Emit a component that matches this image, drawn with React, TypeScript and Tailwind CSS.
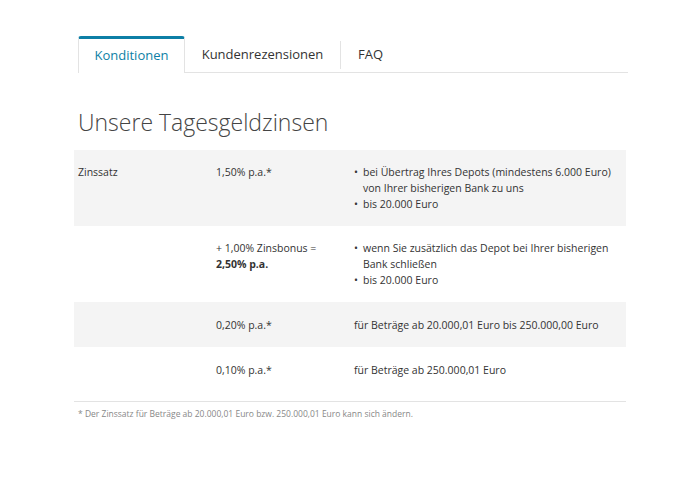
export default function App() {
    const font = { fontFamily: '"Open Sans", "Liberation Sans", sans-serif' };
    return (
        <div className="w-[680px] h-[477px] bg-white text-[#333]" style={font}>
            <div className="ml-[74px] w-[552px] pt-[36px]">
                {/* Tabs */}
                <div className="flex h-[37px] border-b border-[#e3e3e3] ml-[4px] -mr-[2px]">
                    <div className="w-[107px] border-t-[3px] border-t-[#0d7fa6] border-x border-x-[#e3e3e3] rounded-t-[3px] bg-white -mb-px flex items-center justify-center text-[13px] text-[#0d7fa6]">
                        Konditionen
                    </div>
                    <div className="w-[155px] flex items-center justify-center text-[13px] pt-[2px]">Kundenrezensionen</div>
                    <div className="w-px bg-[#e3e3e3] h-[28px] mt-[5px]" />
                    <div className="pl-[17px] flex items-center text-[13px] pt-[2px]">FAQ</div>
                </div>

                <h1 className="ml-[4px] mt-[34px] text-[23px] font-light text-[#444] leading-[30px]">Unsere Tagesgeldzinsen</h1>

                <div className="mt-[13px] text-[10.5px] leading-[16px]">
                    <div className="flex bg-[#f4f4f4] h-[76px] pt-[14px]">
                        <div className="w-[142px] pl-[4px]">Zinssatz</div>
                        <div className="w-[138px]">1,50% p.a.*</div>
                        <ul className="w-[265px]">
                            <li className="flex"><span className="w-[9px]">•</span><span className="flex-1">bei Übertrag Ihres Depots (mindestens 6.000 Euro) von Ihrer bisherigen Bank zu uns</span></li>
                            <li className="flex"><span className="w-[9px]">•</span><span>bis 20.000 Euro</span></li>
                        </ul>
                    </div>
                    <div className="flex h-[76px] pt-[14px]">
                        <div className="w-[142px]" />
                        <div className="w-[138px]">+ 1,00% Zinsbonus =<br /><b>2,50% p.a.</b></div>
                        <ul className="w-[265px]">
                            <li className="flex"><span className="w-[9px]">•</span><span className="flex-1">wenn Sie zusätzlich das Depot bei Ihrer bisherigen Bank schließen</span></li>
                            <li className="flex"><span className="w-[9px]">•</span><span>bis 20.000 Euro</span></li>
                        </ul>
                    </div>
                    <div className="flex bg-[#f4f4f4] h-[45px] items-center">
                        <div className="w-[142px]" />
                        <div className="w-[138px]">0,20% p.a.*</div>
                        <div>für Beträge ab 20.000,01 Euro bis 250.000,00 Euro</div>
                    </div>
                    <div className="flex h-[45px] items-center">
                        <div className="w-[142px]" />
                        <div className="w-[138px]">0,10% p.a.*</div>
                        <div>für Beträge ab 250.000,01 Euro</div>
                    </div>
                </div>

                <div className="mt-[9px] border-t border-[#e3e3e3] pt-[6px] pl-[4px] text-[8.5px] text-[#888]">
                    * Der Zinssatz für Beträge ab 20.000,01 Euro bzw. 250.000,01 Euro kann sich ändern.
                </div>
            </div>
        </div>
    );
}
